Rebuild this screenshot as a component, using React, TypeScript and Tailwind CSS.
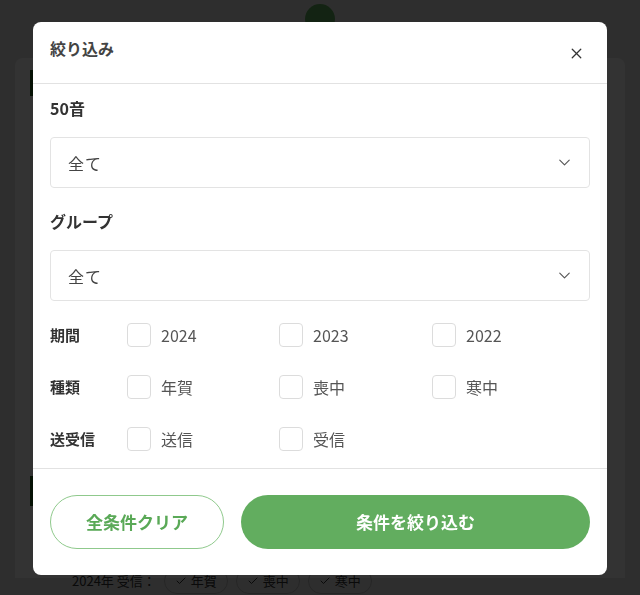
import { ChevronDown, X, Check } from 'lucide-react';

const font = { fontFamily: '"Noto Sans CJK JP", "Noto Sans", sans-serif' };

function SelectBox({ value }: { value: string }) {
  return (
    <div className="flex h-[51px] items-center justify-between rounded-[4px] border border-[#e3e3e3] pl-[17px] pr-[15px]">
      <span className="text-[16px] tracking-[1px] text-[#444]">{value}</span>
      <ChevronDown size={19} strokeWidth={1.4} className="text-[#555]" />
    </div>
  );
}

function CheckRow({ label, options }: { label: string; options: string[] }) {
  return (
    <div className="flex h-[24px] items-center">
      <div className="w-[77px] text-[15px] font-bold text-[#333]">{label}</div>
      <div className="grid grid-cols-[152px_153px_152px]">
        {options.map((o) => (
          <label key={o} className="flex items-center gap-[10px]">
            <span className="h-[24px] w-[24px] rounded-[4px] border border-[#dcdcdc] bg-white" />
            <span className="text-[16px] text-[#555]">{o}</span>
          </label>
        ))}
      </div>
    </div>
  );
}

export default function App() {
  return (
    <div className="relative h-[595px] w-[640px] overflow-hidden bg-[#e6e6e6]" style={font}>
      {/* page behind */}
      <div className="flex h-[58px] justify-center pt-[4px]">
        <div className="h-[30px] w-[30px] rounded-full bg-[#62ad5f]" />
      </div>
      <div className="mx-[15px] h-[520px] rounded-t-[8px] bg-white px-[15px] pt-[12px]">
        <div className="h-[26px] w-[4px] bg-[#1f5a1c]" />
        <div className="h-[380px]" />
        <div className="h-[30px] w-[4px] bg-[#1f5a1c]" />
        <div className="flex items-center gap-[8px] pl-[42px] pt-[62px] text-[13px] text-[#333]">
          <span>2024年 受信：</span>
          {['年賀', '喪中', '寒中'].map((t) => (
            <span key={t} className="flex items-center gap-[4px] rounded-full border border-[#bbb] px-[10px] py-[2px]">
              <Check size={12} />
              {t}
            </span>
          ))}
        </div>
      </div>

      {/* overlay */}
      <div className="fixed inset-0 flex items-center justify-center bg-black/80 pt-[2px]">
        <div className="flex h-[553px] w-[574px] flex-col rounded-[8px] bg-white">
          <div className="flex h-[62px] items-start justify-between border-b border-[#e2e2e2] px-[17px]">
            <h2 className="pt-[14px] text-[16px] font-bold text-[#444]">絞り込み</h2>
            <button className="mt-[23px] mr-[5px] text-[#333]">
              <X size={17} strokeWidth={1.8} />
            </button>
          </div>

          <div className="flex-1 px-[17px] pt-[12px]">
            <div className="mb-[17px] h-[24px] text-[16px] leading-[24px] font-bold text-[#333]">50音</div>
            <SelectBox value="全て" />
            <div className="mt-[21px] mb-[17px] h-[24px] text-[16px] leading-[24px] font-bold text-[#333]">グループ</div>
            <SelectBox value="全て" />
            <div className="mt-[22px] flex flex-col gap-[28px]">
              <CheckRow label="期間" options={['2024', '2023', '2022']} />
              <CheckRow label="種類" options={['年賀', '喪中', '寒中']} />
              <CheckRow label="送受信" options={['送信', '受信']} />
            </div>
          </div>

          <div className="flex gap-[17px] border-t border-[#e2e2e2] px-[17px] pt-[26px] pb-[26px]">
            <button className="h-[54px] w-[174px] rounded-full border border-[#8fc98c] text-[17px] font-bold text-[#5aa957]">
              全条件クリア
            </button>
            <button className="h-[54px] flex-1 rounded-full bg-[#62ad5f] text-[17px] font-bold text-white">
              条件を絞り込む
            </button>
          </div>
        </div>
      </div>
    </div>
  );
}
